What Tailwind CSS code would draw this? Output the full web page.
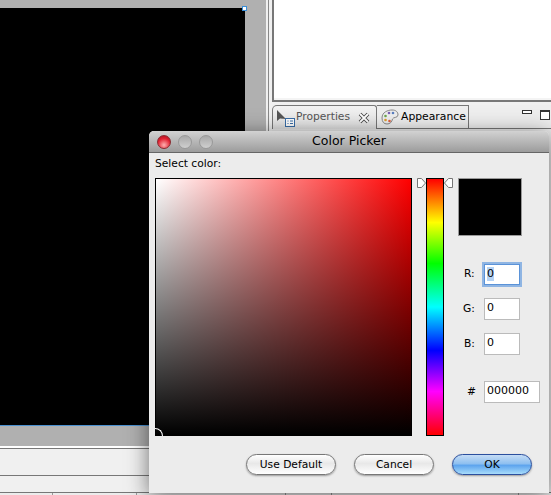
<!DOCTYPE html>
<html lang="en">
<head>
<meta charset="UTF-8">
<title>Color Picker</title>
<script src="https://cdn.jsdelivr.net/npm/@tailwindcss/browser@4"></script>
</head>
<body class="m-0 overflow-hidden bg-[#ececec] font-['DejaVu_Sans',sans-serif] text-black">
<div class="relative flex h-[495px] w-[551px] overflow-hidden">

  <!-- editor area on the left -->
  <div class="flex w-[266px] shrink-0 flex-col">
    <div class="h-[446px] bg-[#b0b0b0] pt-[8px]">
      <div class="relative h-[418px] w-[245px] border-b border-[#4a90d0] bg-black">
        <div class="absolute -right-[2px] -top-[2px] h-[5px] w-[5px] border border-[#3b8fd8] bg-white"></div>
      </div>
    </div>
    <div class="h-[2px] bg-white"></div>
    <div class="h-[27px] border-t border-[#777] bg-[#f0f0f0]"></div>
    <div class="h-[17px] border-t border-[#777] bg-[#f0f0f0]"></div>
    <div class="flex flex-1 border-t border-[#777] bg-[#ececec]">
      <div class="w-[53px] border-r border-[#999]"></div>
      <div class="w-[84px] border-r border-[#999]"></div>
    </div>
  </div>

  <!-- right column -->
  <div class="flex flex-1 flex-col bg-[#f0f0f0] pl-[2px]">
    <div class="flex flex-1 flex-col border-l border-[#888] pl-[3px]">
      <div class="h-[102px] border-b-2 border-l-2 border-t-0 border-[#777] bg-white shadow-[inset_0_-2px_0_#f4f4f4]"></div>
      <div class="mt-[3px] flex h-[24px] border-b border-[#777] bg-[#eeeeee]">
        <div class="-mb-px flex w-[105px] items-center rounded-tl-[5px] rounded-tr-[3px] border-x border-t border-[#777] bg-[linear-gradient(to_bottom,#f2f2f2,#e2e2e2)] pl-[3px] text-[10.7px] text-[#555]">
          <svg width="20" height="20" viewBox="0 0 20 20" class="shrink-0">
            <path d="M1 2 L1 13 L4 10.5 L10 11 Z" fill="#555"/>
            <rect x="9.5" y="10.5" width="9" height="8" fill="#fff" stroke="#3a6ea8"/>
            <path d="M11.5 13h1M14 13h3M11.5 15.5h1M14 15.5h3" stroke="#3a6ea8"/>
          </svg>
          <span>Properties</span>
          <svg width="12" height="12" viewBox="0 0 12 12" class="ml-[8px] shrink-0">
            <path d="M2 2 L10 10 M10 2 L2 10" stroke="#444" stroke-width="3.6"/>
            <path d="M2 2 L10 10 M10 2 L2 10" stroke="#fff" stroke-width="1.8"/>
          </svg>
        </div>
        <div class="flex w-[92px] items-center border-r border-t border-[#777] pl-[4px] text-[10.8px]">
          <svg width="18" height="16" viewBox="0 0 18 16" class="shrink-0">
            <path d="M1 9 C1 3 7 1 11 1 C15 1 17 3 17 6 C17 9 12 8 11.5 10 C11 13 9 15 6 15 C3 15 1 13 1 9 Z" fill="#eee" stroke="#888"/>
            <circle cx="8" cy="4" r="1.3" fill="#7a5fb5"/>
            <circle cx="12" cy="4" r="1.3" fill="#5a7fc0"/>
            <circle cx="4.5" cy="7" r="1.3" fill="#6aa84f"/>
            <circle cx="4.5" cy="11" r="1.3" fill="#e0a030"/>
            <circle cx="8.5" cy="12" r="1.3" fill="#e06040"/>
          </svg>
          <span class="ml-[2px]">Appearance</span>
        </div>
        <div class="flex flex-1 items-start justify-end gap-[8px] pr-[1px] pt-[5px]">
          <div class="h-[4px] w-[10px] border border-[#333] bg-white"></div>
          <div class="h-[10px] w-[10px] border border-t-2 border-[#333] bg-white"></div>
        </div>
      </div>
      <div class="flex-1 bg-[#ececec]"></div>
    </div>
    <div class="-ml-[2px] flex h-[3px] border-t border-[#777] bg-[#ececec]">
      <div class="w-[20px] border-r border-[#999]"></div>
      <div class="w-[46px] border-r border-[#999]"></div>
      <div class="w-[187px] border-r border-[#999]"></div>
    </div>
  </div>

  <!-- dialog -->
  <div class="absolute left-[149px] top-[131px] flex h-[362px] w-[400px] flex-col rounded-t-[5px] bg-[#ececec] shadow-[0_4px_22px_rgba(0,0,0,0.55)]">
    <div class="relative flex h-[22px] shrink-0 items-center justify-center rounded-t-[5px] border-b border-[#666] bg-[linear-gradient(to_bottom,#d2d2d2,#9c9c9c)] text-[12.5px]">
      <div class="absolute left-[8px] top-[4px] flex gap-[7px]">
        <div class="h-[14px] w-[14px] rounded-full border border-[#8a2a30] bg-[radial-gradient(circle_at_50%_75%,#ffb0b0,#e02030_60%,#a01020)]"></div>
        <div class="h-[14px] w-[14px] rounded-full border border-[#999] bg-[linear-gradient(to_bottom,#a8a8a8,#cfcfcf)]"></div>
        <div class="h-[14px] w-[14px] rounded-full border border-[#999] bg-[linear-gradient(to_bottom,#a8a8a8,#cfcfcf)]"></div>
      </div>
      <span>Color Picker</span>
    </div>

    <p class="ml-[6px] mt-[2px] h-[23px] text-[10.7px] leading-[18px]">Select color:</p>

    <div class="ml-[6px] flex items-start">
      <div class="relative h-[258px] w-[257px] border border-black bg-[linear-gradient(to_top,#000,transparent),linear-gradient(to_right,#fff,#f00)]">
        <div class="absolute -bottom-[1px] -left-[1px] h-[8px] w-[8px] rounded-tr-[8px] border-r border-t border-white"></div>
      </div>

      <div class="relative ml-[14px] h-[258px] w-[18px] border border-black bg-[linear-gradient(to_bottom,#f00,#ff0_17%,#0f0_33%,#0ff_50%,#00f_67%,#f0f_83%,#f00)]">
        <svg width="9" height="10" viewBox="0 0 9 10" class="absolute -left-[10px] -top-[1px]"><path d="M.5 .5H4.5L8.5 5L4.5 9.5H.5Z" fill="#fff" stroke="#777"/></svg>
        <svg width="9" height="10" viewBox="0 0 9 10" class="absolute -right-[10px] -top-[1px]"><path d="M8.5 .5H4.5L.5 5L4.5 9.5H8.5Z" fill="#fff" stroke="#777"/></svg>
      </div>

      <div class="ml-[14px] flex flex-col">
        <div class="h-[58px] w-[64px] border border-[#999] bg-black"></div>
        <div class="mt-[28px] flex h-[21px] items-center">
          <span class="w-[26px] pl-[6px] text-[10.7px]">R:</span>
          <div class="flex h-[21px] w-[36px] items-center border border-[#5b93d8] bg-white pb-[2px] pl-[2px] text-[11px] shadow-[0_0_0_2px_#8fb5e3]"><span class="bg-[#b5d3f5] leading-[14px]">0</span></div>
        </div>
        <div class="mt-[13px] flex h-[22px] items-center">
          <span class="w-[26px] pl-[5px] text-[10.7px]">G:</span>
          <div class="flex h-[22px] w-[36px] items-center border border-[#bbb] bg-white pb-[2px] pl-[2px] text-[11px]">0</div>
        </div>
        <div class="mt-[13px] flex h-[22px] items-center">
          <span class="w-[26px] pl-[6px] text-[10.7px]">B:</span>
          <div class="flex h-[22px] w-[36px] items-center border border-[#bbb] bg-white pb-[2px] pl-[2px] text-[11px]">0</div>
        </div>
        <div class="mt-[26px] flex h-[22px] items-center">
          <span class="w-[26px] pl-[9px] text-[10.7px]">#</span>
          <div class="flex h-[22px] w-[56px] items-center border border-[#bbb] bg-white pb-[2px] pl-[2px] text-[11px]">000000</div>
        </div>
      </div>
    </div>

    <div class="ml-[97px] mt-[18px] flex gap-[18px] text-[10.7px]">
      <button class="h-[21px] w-[90px] rounded-full border border-[#777] bg-[linear-gradient(to_bottom,#fff,#e8e8e8_45%,#fff)] pt-[1px] shadow-[0_1px_2px_rgba(0,0,0,0.35)]">Use Default</button>
      <button class="h-[21px] w-[80px] rounded-full border border-[#777] bg-[linear-gradient(to_bottom,#fff,#e8e8e8_45%,#fff)] pt-[1px] shadow-[0_1px_2px_rgba(0,0,0,0.35)]">Cancel</button>
      <button class="h-[21px] w-[80px] rounded-full border border-[#2b4f9e] bg-[linear-gradient(to_bottom,#c5dcf5,#8fc0f0_45%,#5ea5ee_55%,#a8dcfb)] pt-[1px] shadow-[0_1px_2px_rgba(0,0,0,0.35)]">OK</button>
    </div>
  </div>
</div>
</body>
</html>
